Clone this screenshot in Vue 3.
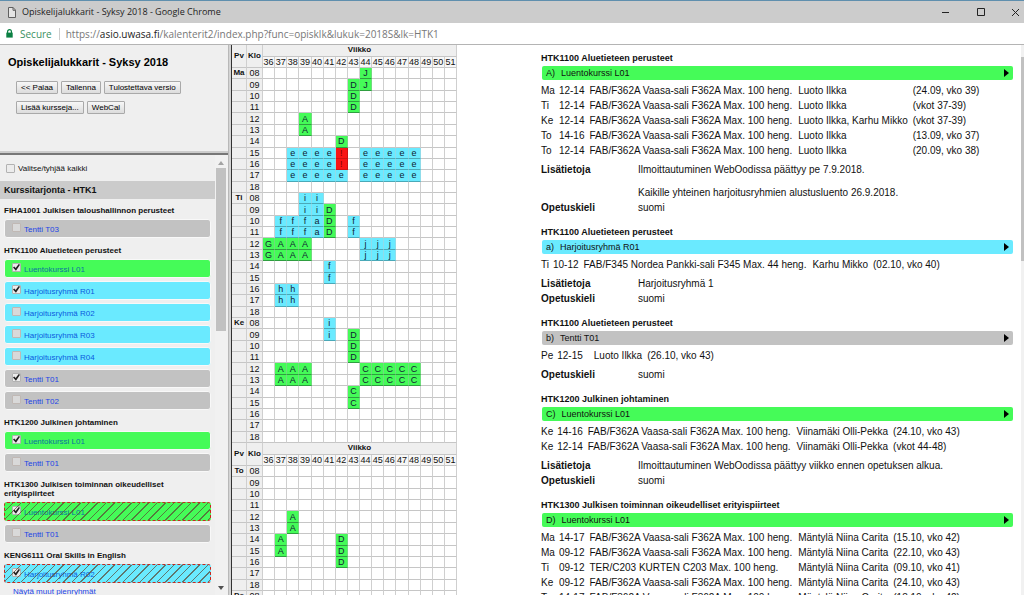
<script setup>
const weeks = Array.from({ length: 16 }, (_, i) => 36 + i)
const hours = ['08', '09', '10', '11', '12', '13', '14', '15', '16', '17', '18']

// One string per hour, one character per week; a dot is a free slot.
const empty = '................'
const blocks = [
  [
    {
      name: 'Ma',
      rows: [
        '........J.......', '.......DJ.......', '.......D........', '.......D........',
        '...A............', '...A............', '......D.........', '..eeee!.eeeee...',
        '..eeee!.eeeee...', '..eeeee.eeeee...', empty
      ]
    },
    {
      name: 'Ti',
      rows: [
        '...ii...........', '...iiD..........', '.fffaD.f........', '.fffaD.f........',
        'GAAA....jjj.....', 'GAAA....jjj.....', '.....f..........', '.....f..........',
        '.hh.............', '.hh.............', empty
      ]
    },
    {
      name: 'Ke',
      rows: [
        '.....i..........', '.....i.D........', '.......D........', '.......D........',
        '.AAA....CCCCC...', '.AAA....CCCCC...', '.......C........', '.......C........',
        empty, empty, empty
      ]
    }
  ],
  [
    {
      name: 'To',
      rows: [
        empty, empty, empty, empty, '..A.............', '..A.............',
        '.A....D.........', '.A....D.........', '......D.........', empty, empty
      ]
    },
    { name: 'Pe', rows: [empty] }
  ]
]

function slotClass(c) {
  if (c === '.') return ''
  if (c === '!') return 'slot clash'
  return c === c.toUpperCase() ? 'slot lecture' : 'slot group'
}

const courses = [
  { title: 'FIHA1001 Julkisen taloushallinnon perusteet', items: [['Tentti T03', 'exam', false]] },
  {
    title: 'HTK1100 Aluetieteen perusteet',
    items: [
      ['Luentokurssi L01', 'lecture', true],
      ['Harjoitusryhmä R01', 'group', true],
      ['Harjoitusryhmä R02', 'group', false],
      ['Harjoitusryhmä R03', 'group', false],
      ['Harjoitusryhmä R04', 'group', false],
      ['Tentti T01', 'exam', true],
      ['Tentti T02', 'exam', false]
    ]
  },
  {
    title: 'HTK1200 Julkinen johtaminen',
    items: [['Luentokurssi L01', 'lecture', true], ['Tentti T01', 'exam', false]]
  },
  {
    title: 'HTK1300 Julkisen toiminnan oikeudelliset erityispiirteet',
    items: [['Luentokurssi L01', 'lecture overlap', true], ['Tentti T01', 'exam', false]]
  },
  {
    title: 'KENG6111 Oral Skills in English',
    items: [['Harjoitusryhmä R02', 'group overlap', true]],
    more: 'Näytä muut pienryhmät'
  }
]

const hall = 'FAB/F362A Vaasa-sali F362A Max. 100 heng.'
const details = [
  {
    title: 'HTK1100 Aluetieteen perusteet', mark: 'A)', name: 'Luentokurssi L01', kind: 'lecture',
    times: [
      ['Ma', '12-14', hall, 'Luoto Ilkka', '(24.09, vko 39)'],
      ['Ti', '12-14', hall, 'Luoto Ilkka', '(vkot 37-39)'],
      ['Ke', '12-14', hall, 'Luoto Ilkka, Karhu Mikko', '(vkot 37-39)'],
      ['To', '14-16', hall, 'Luoto Ilkka', '(13.09, vko 37)'],
      ['To', '12-14', hall, 'Luoto Ilkka', '(20.09, vko 38)']
    ],
    info: ['Ilmoittautuminen WebOodissa päättyy pe 7.9.2018.', 'Kaikille yhteinen harjoitusryhmien alustusluento 26.9.2018.']
  },
  {
    title: 'HTK1100 Aluetieteen perusteet', mark: 'a)', name: 'Harjoitusryhmä R01', kind: 'group',
    times: [['Ti', '10-12', 'FAB/F345 Nordea Pankki-sali F345 Max. 44 heng.', 'Karhu Mikko', '(02.10, vko 40)']],
    info: ['Harjoitusryhmä 1']
  },
  {
    title: 'HTK1100 Aluetieteen perusteet', mark: 'b)', name: 'Tentti T01', kind: 'exam',
    times: [['Pe', '12-15', '', 'Luoto Ilkka', '(26.10, vko 43)']],
    info: []
  },
  {
    title: 'HTK1200 Julkinen johtaminen', mark: 'C)', name: 'Luentokurssi L01', kind: 'lecture',
    times: [
      ['Ke', '14-16', hall, 'Viinamäki Olli-Pekka', '(24.10, vko 43)'],
      ['Ke', '12-14', hall, 'Viinamäki Olli-Pekka', '(vkot 44-48)']
    ],
    info: ['Ilmoittautuminen WebOodissa päättyy viikko ennen opetuksen alkua.']
  },
  {
    title: 'HTK1300 Julkisen toiminnan oikeudelliset erityispiirteet', mark: 'D)', name: 'Luentokurssi L01', kind: 'lecture',
    times: [
      ['Ma', '14-17', hall, 'Mäntylä Niina Carita', '(15.10, vko 42)'],
      ['Ma', '09-12', hall, 'Mäntylä Niina Carita', '(22.10, vko 43)'],
      ['Ti', '09-12', 'TER/C203 KURTEN C203 Max. 100 heng.', 'Mäntylä Niina Carita', '(09.10, vko 41)'],
      ['Ke', '09-12', hall, 'Mäntylä Niina Carita', '(24.10, vko 43)'],
      ['To', '14-17', hall, 'Mäntylä Niina Carita', '(18.10, vko 42)']
    ],
    info: []
  }
]
</script>

<template>
  <div class="window">
    <header class="titlebar">
      <svg class="doc" viewBox="0 0 8 11" width="8" height="11" aria-hidden="true">
        <path d="M.5.5h4.6l2.4 2.6v7.4h-7z" fill="#e4e4e4" stroke="#606060" />
        <path d="M5 .5v2.8h2.5" fill="none" stroke="#606060" />
      </svg>
      <span class="caption">Opiskelijalukkarit - Syksy 2018 - Google Chrome</span>
      <div class="controls">
        <button type="button" aria-label="Minimize">
          <svg viewBox="0 0 9 9" width="9" height="9"><path d="M1 4.5h7" stroke="#222" fill="none" /></svg>
        </button>
        <button type="button" aria-label="Maximize">
          <svg viewBox="0 0 9 9" width="9" height="9"><path d="M1.5.5h7v7h-7z" stroke="#222" fill="none" /></svg>
        </button>
        <button type="button" aria-label="Close">
          <svg viewBox="0 0 9 9" width="9" height="9"><path d="M1 1l7 7M8 1l-7 7" stroke="#222" fill="none" /></svg>
        </button>
      </div>
    </header>

    <div class="address">
      <svg viewBox="0 0 7 9" width="7" height="9" aria-hidden="true">
        <path d="M1.6 4V2.6a1.9 1.9 0 0 1 3.8 0V4" fill="none" stroke="#0b8043" stroke-width="1.2" />
        <path d="M.3 3.6h6.4v5H.3z" fill="#0b8043" />
      </svg>
      <span class="secure">Secure</span>
      <span class="url">https://<b>asio.uwasa.fi</b>/kalenterit2/index.php?func=opisklk&amp;lukuk=2018S&amp;lk=HTK1</span>
    </div>

    <main class="frames">
      <div class="side">
        <section class="tools">
          <h1>Opiskelijalukkarit - Syksy 2018</h1>
          <div class="buttons">
            <button type="button">&lt;&lt; Palaa</button>
            <button type="button">Tallenna</button>
            <button type="button">Tulostettava versio</button>
          </div>
          <div class="buttons">
            <button type="button">Lisää kursseja...</button>
            <button type="button">WebCal</button>
          </div>
        </section>

        <section class="offer">
          <div class="list">
            <label class="all"><input type="checkbox" />Valitse/tyhjää kaikki</label>
            <h2>Kurssitarjonta - HTK1</h2>
            <div v-for="c in courses" :key="c.title" class="course">
              <h3>{{ c.title }}</h3>
              <div v-for="it in c.items" :key="it[0]" class="item" :class="it[1]">
                <input type="checkbox" :checked="it[2]" :aria-label="it[0]" />
                <a href="#">{{ it[0] }}</a>
              </div>
              <a v-if="c.more" class="more" href="#">{{ c.more }}</a>
            </div>
          </div>
          <div class="rail" aria-hidden="true">
            <svg viewBox="0 0 6 4" width="6" height="4"><path d="M0 4l3-4 3 4z" fill="#a3a3a3" /></svg>
            <div class="thumb"></div>
            <svg viewBox="0 0 6 4" width="6" height="4"><path d="M0 0l3 4 3-4z" fill="#505050" /></svg>
          </div>
        </section>
      </div>

      <div class="divider"></div>

      <section class="calendar">
        <table v-for="(block, b) in blocks" :key="b">
          <colgroup>
            <col class="c-day" /><col class="c-hour" /><col v-for="w in weeks" :key="w" />
          </colgroup>
          <thead>
            <tr>
              <th rowspan="2">Pv</th>
              <th rowspan="2">Klo</th>
              <th colspan="16">Viikko</th>
            </tr>
            <tr>
              <th v-for="w in weeks" :key="w" class="week">{{ w }}</th>
            </tr>
          </thead>
          <tbody v-for="d in block" :key="d.name" :class="{ full: d.rows.length === 11 }">
            <tr v-for="(row, r) in d.rows" :key="r">
              <th>{{ r === 0 ? d.name : '' }}</th>
              <td class="hour">{{ hours[r] }}</td>
              <td v-for="(c, i) in row" :key="i" :class="slotClass(c)">{{ c === '.' ? '' : c }}</td>
            </tr>
          </tbody>
        </table>
      </section>

      <section class="details">
        <div class="sheet">
          <article v-for="(d, n) in details" :key="n">
            <h3>{{ d.title }}</h3>
            <div class="bar" :class="d.kind">
              <span class="mark">{{ d.mark }}</span>
              <span>{{ d.name }}</span>
              <svg viewBox="0 0 5 8" width="5" height="8" aria-hidden="true"><path d="M0 0l5 4-5 4z" fill="#000" /></svg>
            </div>
            <table class="times">
              <tbody>
                <tr v-for="(t, k) in d.times" :key="k">
                  <td v-for="(cell, j) in t" :key="j">{{ cell }}</td>
                </tr>
              </tbody>
            </table>
            <dl v-if="n < details.length - 1">
              <template v-if="d.info.length">
                <dt>Lisätietoja</dt>
                <dd><p v-for="p in d.info" :key="p">{{ p }}</p></dd>
              </template>
              <dt>Opetuskieli</dt>
              <dd>suomi</dd>
            </dl>
          </article>
        </div>
        <div class="rail slim" aria-hidden="true"><div class="thumb"></div></div>
      </section>
    </main>
  </div>
</template>

<style>
html, body { margin: 0; overflow: hidden; }
</style>

<style scoped>
.window {
  height: 100vh;
  display: flex;
  flex-direction: column;
  overflow: hidden;
  background: #fff;
  color: #111;
  font: 10px/15px "Liberation Sans", Arial, sans-serif;
}
h1, h2, h3, p, dl, dd { margin: 0; }
a { text-decoration: none; }

.titlebar {
  flex: none;
  display: flex;
  align-items: center;
  gap: 6px;
  height: 23px;
  box-sizing: border-box;
  padding: 0 4px 0 8px;
  border-top: 1px solid #5f8fae;
  background: #ccc;
}
.caption {
  flex: 1;
  font: 9px/14px "Open Sans", "Noto Sans", sans-serif;
  color: #222;
}
.controls { display: flex; gap: 26px; }
.controls button {
  display: flex;
  padding: 0;
  border: 0;
  background: none;
}
.address {
  flex: none;
  display: flex;
  align-items: center;
  height: 21px;
  padding-left: 6px;
  border-bottom: 1px solid #b4b4b4;
  font: 10px/14px "Open Sans", "Noto Sans", sans-serif;
  color: #777;
}
.secure {
  margin-left: 7px;
  padding-right: 7px;
  border-right: 1px solid #ccc;
  line-height: 12px;
  color: #3c8f62;
}
.url { margin-left: 6px; }
.url b { font-weight: 400; color: #222; }

.frames {
  flex: 1;
  min-height: 0;
  display: grid;
  grid-template-columns: 228px 4px 225px minmax(0, 1fr);
}
.side { display: flex; flex-direction: column; min-height: 0; background: #efefef; }
.tools { flex: none; height: 108px; }
.tools h1 { padding: 10px 0 11px 8px; font-size: 11px; line-height: 15px; color: #000; }
.buttons { display: flex; gap: 3px; padding: 0 0 7px 16px; }
.buttons button {
  height: 13px;
  padding: 0 4px;
  border: 1px solid #a9a9a9;
  border-radius: 1px;
  background: linear-gradient(#f7f7f7, #dcdcdc);
  font: 8px/11px "Liberation Sans", Arial, sans-serif;
  color: #000;
}
.offer {
  flex: 1;
  min-height: 0;
  display: flex;
  border-top: 2px solid #777;
  box-shadow: 0 -2px 0 #ccc;
}
.list { flex: 1; min-width: 0; overflow: hidden; }
.all {
  display: flex;
  align-items: center;
  gap: 3px;
  height: 26px;
  padding-left: 6px;
  font-size: 8px;
}
.list h2 {
  padding: 0 4px;
  background: #cbcbcb;
  font-size: 9px;
  line-height: 18px;
}
.course { display: flex; flex-direction: column; }
.course h3 {
  padding: 7px 30px 2px 4px;
  font-size: 8px;
  line-height: 9px;
}
.item {
  position: relative;
  display: flex;
  align-items: center;
  gap: 3px;
  height: 15px;
  margin: 2px 4px 1px;
  padding: 0 0 2px 7px;
  border: 1px solid #f8f8f8;
  border-radius: 3px;
}
.item a { padding-top: 5px; font-size: 8px; line-height: 10px; color: #1c45e6; }
.lecture { background: #45fb58; }
.group { background: #6aeaff; }
.exam { background: #c2c2c2; }
.item.lecture a { color: #0b74a0; }
.item.group a { color: #0a5ce0; }
.item.overlap { border: 1px dashed #c8281e; }
.item.overlap::after {
  content: "";
  position: absolute;
  inset: 0;
  pointer-events: none;
  background: repeating-linear-gradient(135deg, transparent 0 5px, rgba(90, 70, 50, 0.7) 5px 6px);
}
.more { margin-left: 13px; font-size: 8px; line-height: 15px; color: #1c45e6; }
input[type="checkbox"] {
  appearance: none;
  flex: none;
  width: 9px;
  height: 9px;
  margin: 0;
  border: 1px solid #b2b2b2;
  border-radius: 1px;
  background: #ececec;
}
.item input[type="checkbox"]:not(:checked) { border-color: #c0b8b4; background: #d9d9d9; }
input[type="checkbox"]:checked::after {
  content: "";
  display: block;
  width: 7px;
  height: 7px;
  background: #222;
  clip-path: polygon(0 50%, 18% 36%, 38% 58%, 82% 0, 100% 12%, 42% 96%);
}
.rail {
  flex: none;
  display: flex;
  flex-direction: column;
  align-items: center;
  width: 11px;
  padding: 6px 2px 5px 0;
  background: #f1f1f1;
}
.rail .thumb { width: 10px; height: 38%; margin: 3px 0 auto; background: #c1c1c1; }
.rail.slim { width: 3px; padding: 12px 0 0; }
.rail.slim .thumb { width: 3px; margin-top: 0; }
.divider {
  box-sizing: border-box;
  border-right: 1px solid #333;
  border-left: 1px solid #b8b8b8;
  background: #d4d4d4;
}

.calendar { overflow: hidden; }
.calendar table {
  width: 100%;
  table-layout: fixed;
  border-collapse: separate;
  border-spacing: 0;
  font-size: 9px;
  line-height: 10px;
}
.c-day { width: 15px; }
.c-hour { width: 16px; }
.calendar thead { height: 23px; }
.calendar tbody.full { height: 125px; }
.calendar th, .calendar td {
  padding: 0;
  border-right: 1px solid #cfcfcf;
  border-bottom: 1px solid #c6c6c6;
  text-align: center;
  white-space: nowrap;
}
.calendar th { font-size: 8px; }
.calendar th, .calendar .hour { background: #efefef; }
.calendar thead .week { background: #f7f7f7; font-size: 9px; font-weight: 400; }
.calendar td.slot { color: #123; }
.calendar td.lecture { border-right-color: #6fdc7c; border-bottom-color: #2f9e40; }
.calendar td.group { border-right-color: #8fdcea; border-bottom-color: #4aa9b8; }
.calendar td.clash { background: #f91414; border-color: #d01010; color: #7a0000; }

.details { display: flex; min-width: 0; min-height: 0; }
.sheet { flex: 1; min-width: 0; overflow: hidden; padding: 5px 8px 0 84px; }
article { margin-bottom: 9px; }
article h3 { font-size: 9px; line-height: 16px; }
.bar {
  display: flex;
  align-items: center;
  gap: 6px;
  margin: 0 0 3px 1px;
  padding: 0 4px;
  border-radius: 2px;
  font-size: 9px;
  line-height: 14px;
}
.bar svg { margin-left: auto; }
.times { border-collapse: collapse; white-space: nowrap; }
.times td { height: 15px; padding: 0 5px 0 0; }
.times td:first-child { padding-right: 4px; }
.times td:nth-child(3) { padding-right: 6px; }
dl {
  display: grid;
  grid-template-columns: 97px minmax(0, 1fr);
  margin-top: 4px;
}
dt { font-weight: 700; }
dd p + p { margin-top: 8px; }
</style>
